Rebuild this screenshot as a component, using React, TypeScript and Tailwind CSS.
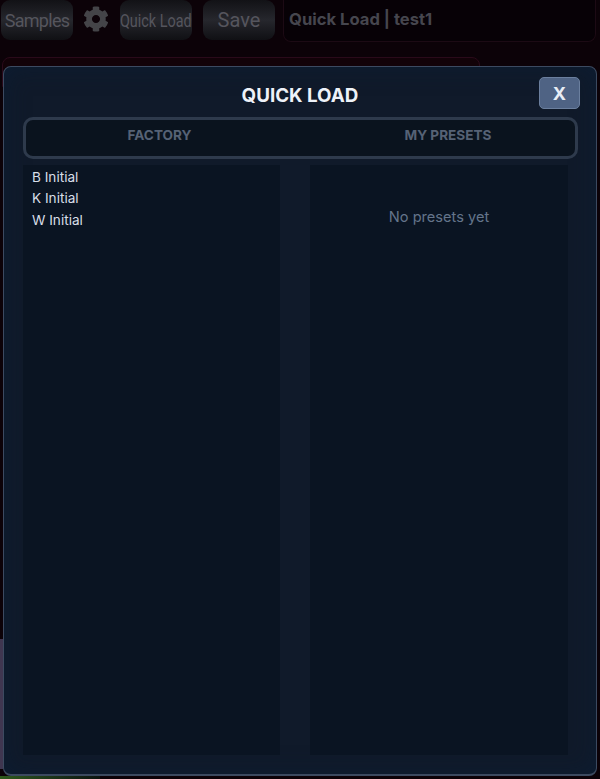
import { FaCog } from "react-icons/fa";

function TopButton({ label, className, labelClassName }: { label: string; className: string; labelClassName?: string }) {
  return (
    <button
      className={`flex h-[40px] items-center justify-center whitespace-nowrap rounded-[9px] bg-gradient-to-b from-[#121216] via-[#26272d] to-[#101014] text-[#55555d] font-['Roboto',sans-serif] ${className}`}
    >
      <span className={labelClassName}>{label}</span>
    </button>
  );
}

export default function App() {
  return (
    <div className="relative h-[779px] w-[600px] overflow-hidden bg-[#0c0208] font-['Inter',sans-serif]">
      {/* page behind the dialog */}
      <div className="flex items-start pl-px">
        <TopButton label="Samples" className="w-[72px] text-[18px] tracking-[-0.7px]" />
        <FaCog className="ml-[10px] mt-[6px] h-[26px] w-[26px] text-[#444448]" />
        <TopButton
          label="Quick Load"
          className="ml-[11px] w-[72px] text-[18px]"
          labelClassName="inline-block shrink-0 scale-x-[0.8]"
        />
        <TopButton label="Save" className="ml-[11px] w-[72px] text-[20px]" />
        <div className="ml-[8px] flex h-[42px] w-[313px] items-start rounded-b-[8px] border border-t-0 border-[#1c0a14] bg-[#070106] pl-[5px] pt-[7px] text-[16.6px] font-bold text-[#46464e]">
          Quick Load | test1
        </div>
      </div>
      <div className="ml-[2px] mt-[15px] h-[30px] w-[478px] rounded-t-[8px] border border-[#2a0a1a] bg-[#120208]" />

      {/* bits of the page that show round the dialog */}
      <div className="absolute left-0 top-[639px] h-[130px] w-[3px] bg-[#3f3650]" />
      <div className="absolute bottom-0 left-0 h-[3px] w-[100px] bg-gradient-to-r from-[#2f5a1c] to-[#0c1410]" />

      {/* dialog */}
      <div className="absolute left-[3px] top-[66px] flex h-[710px] w-[594px] flex-col rounded-[8px] border border-b-2 border-[#3c4a60] bg-[#101a2a] px-[19px] pb-[19px] shadow-[inset_0_0_24px_rgba(10,30,55,0.6)]">
        <div className="relative flex h-[50px] shrink-0 items-center justify-center">
          <h2 className="pt-[8px] text-[18.8px] font-bold leading-none text-[#eef2f8]">QUICK LOAD</h2>
          <button className="absolute right-[-3px] top-[10px] flex h-[32px] w-[41px] items-center justify-center rounded-[5px] border border-[#6b7f9e] bg-[#4f6384] text-[18px] font-bold text-[#e8edf5]">
            X
          </button>
        </div>
        <div className="flex h-[42px] w-[555px] shrink-0 rounded-[10px] border-[3px] border-[#2e3a4c] bg-[#0a131e] text-[13.6px] font-bold text-[#566275]">
          <div className="flex w-[267px] items-start justify-center pt-[5px]">FACTORY</div>
          <div className="flex flex-1 items-start justify-center pl-[28px] pt-[5px]">MY PRESETS</div>
        </div>
        <div className="mt-[6px] flex min-h-0 flex-1">
          <ul className="w-[257px] bg-[#0a1422] pl-[9px] pt-[1.6px] text-[13.6px] leading-[21.5px] text-[#d8dee8]">
            <li>B Initial</li>
            <li>K Initial</li>
            <li>W Initial</li>
          </ul>
          <div className="ml-[30px] w-[258px] bg-[#0a1422] pt-[42px] text-center text-[14.6px] leading-5 text-[#64748b]">
            No presets yet
          </div>
        </div>
      </div>
    </div>
  );
}
